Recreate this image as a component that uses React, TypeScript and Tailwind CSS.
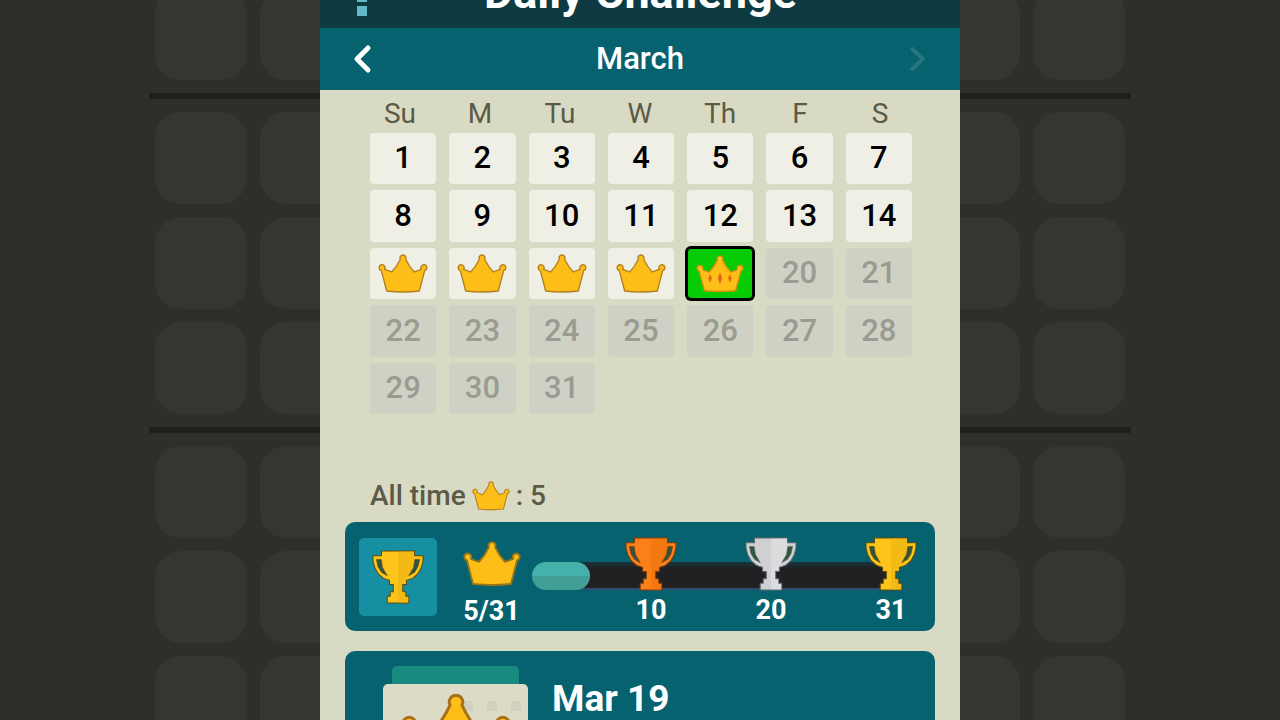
// Daily Challenge Page

import React, { useState } from 'react';
import clsx from 'clsx';

const weekdays = ['Su', 'M', 'Tu', 'W', 'Th', 'F', 'S'];
const days = Array.from({ length: 31 }, (_, i) => i + 1);
const solved = [15, 16, 17, 18];
const today = 19;

const milestones = [
  { goal: 10, color: '#fb8019', shade: '#f47710', stroke: '#7a3a08' },
  { goal: 20, color: '#d0d0d3', shade: '#dcdcdf', stroke: '#5d6a6c' },
  { goal: 31, color: '#fdc51b', shade: '#f3b914', stroke: '#5c4a0c' },
];

type CrownProps = {
  className?: string;
  stroke?: string;
  strokeWidth?: number;
  gems?: boolean;
};

const Crown: React.FC<CrownProps> = ({ className, stroke = '#b07f22', strokeWidth = 4, gems }) => (
  <svg viewBox="0 0 150 116" className={className} aria-hidden="true">
    <path
      d="M20 46 L41 54 Q57 38 67 16 A9 9 0 1 1 83 16 Q93 38 109 54 L130 46 A9 9 0 1 1 140 50 L124 111 Q75 117 26 111 L10 50 A9 9 0 1 1 20 46 Z"
      fill="#fdbf17"
      stroke={stroke}
      strokeWidth={strokeWidth}
      strokeLinejoin="round"
    />
    {gems && (
      <path
        d="M75 54 L82 73 L75 92 L68 73 Z M44 60 L50 73 L44 87 L38 73 Z M106 60 L112 73 L106 87 L100 73 Z"
        fill="#e8641b"
      />
    )}
  </svg>
);

type TrophyProps = {
  className?: string;
  color: string;
  shade: string;
  stroke: string;
};

const Trophy: React.FC<TrophyProps> = ({ className, color, shade, stroke }) => (
  <svg viewBox="0 0 154 160" className={className} aria-hidden="true">
    <path
      d="M3 17 H28 V3 H126 V17 H151 V32 L146 52 L136 70 L120 84 L102 90 V102 H91 V124 H100 V137 H109 V157 H45 V137 H54 V124 H63 V102 H52 V90 L34 84 L18 70 L8 52 L3 32 Z"
      fill={color}
      stroke={stroke}
      strokeWidth="3"
    />
    <path d="M77 5 H124 V34 L118 60 L100 88 V100 H89 V126 H98 V139 H107 V155 H77 Z" fill={shade} />
    <path
      d="M13 28 H27 L31 52 L45 76 L28 66 L18 50 Z M141 28 H127 L123 52 L109 76 L126 66 L136 50 Z"
      fill="#31543f"
      stroke={stroke}
      strokeWidth="2"
    />
  </svg>
);

const Tile: React.FC = () => <div className="size-[92px] shrink-0 rounded-[26px] bg-[#363630]" />;

const TileRow: React.FC = () => (
  <div className="flex gap-[13px] px-[6px]">
    <Tile />
    <Tile />
  </div>
);

// Dimmed game board that shows on both sides of the panel
const Board: React.FC = () => (
  <div className="flex w-[171px] flex-col overflow-hidden">
    <div className="flex h-20 shrink-0 flex-col justify-end">
      <TileRow />
    </div>
    {[0, 1].map((group) => (
      <div key={group} className="shrink-0 pt-[13px]">
        <div className="h-[6px] bg-[#201f1d]" />
        <div className="flex flex-col gap-[13px] pt-[13px]">
          <TileRow />
          <TileRow />
          <TileRow />
        </div>
      </div>
    ))}
  </div>
);

const App: React.FC = () => {
  const [selected, setSelected] = useState(today);

  return (
    <div className="grid h-screen grid-cols-[1fr_2fr_1fr] overflow-hidden bg-[#2f2f2a] font-[Roboto,sans-serif]">
      <div className="flex min-h-0 justify-end overflow-hidden">
        <Board />
      </div>

      <main className="min-h-0 min-w-0 overflow-hidden bg-[#d9dac4]">
        <header className="grid h-7 grid-cols-[1fr_auto_1fr] grid-rows-[28px] items-end overflow-hidden bg-[#0d3b41] px-9 pl-[37px] text-white">
          <button aria-label="Menu" className="flex w-3 flex-col gap-1 pb-3">
            <span className="size-[10px] bg-[#63b7c6]" />
            <span className="size-[10px] bg-[#63b7c6]" />
            <span className="size-[10px] bg-[#63b7c6]" />
          </button>
          <h1 className="pb-3 text-[45px] leading-[46px] font-bold">Daily Challenge</h1>
        </header>

        <div className="flex h-[62px] items-center justify-between bg-[#06626f] px-8 text-white">
          <button aria-label="Previous month">
            <svg viewBox="0 0 24 32" className="h-8 w-6">
              <path d="M16 5 L5 16 L16 27" fill="none" stroke="#fff" strokeWidth="5" strokeLinecap="round" strokeLinejoin="round" />
            </svg>
          </button>
          <h2 className="text-[31px] font-medium">March</h2>
          <button aria-label="Next month" disabled>
            <svg viewBox="0 0 24 32" className="h-8 w-6">
              <path d="M7 5 L19 16 L7 27" fill="none" stroke="#24767f" strokeWidth="4" strokeLinejoin="round" />
            </svg>
          </button>
        </div>

        <div className="grid grid-cols-7 px-10 pt-[5px] text-center text-[28px] leading-[38px] text-[#5b5a47]">
          {weekdays.map((day) => (
            <span key={day}>{day}</span>
          ))}
        </div>
        <div className="mr-12 ml-[50px] grid h-[281px] grid-cols-7 grid-rows-5 gap-x-[13px] gap-y-[6px]">
          {days.map((day) => (
            <button
              key={day}
              disabled={day > today}
              aria-label={`March ${day}`}
              onClick={() => setSelected(day)}
              className={clsx(
                'flex items-center justify-center rounded-[4px] text-[31px] font-medium',
                day > today ? 'bg-[#d0d1c5] text-[#9a9b91]' : 'text-black',
                day <= today && (day === selected ? 'border border-black bg-[#05cc05] ring-2 ring-black' : 'bg-[#f0efe6]')
              )}
            >
              {solved.includes(day) && <Crown className="w-[50px]" />}
              {day === today && <Crown className="w-12" stroke="#e08a10" gems />}
              {!solved.includes(day) && day !== today && day}
            </button>
          ))}
        </div>

        <p className="mt-[62px] flex h-10 items-center gap-[6px] px-[50px] text-[28px] font-medium text-[#5b5a47]">
          All time <Crown className="w-[38px]" /> : 5
        </p>

        <section className="mx-[25px] mt-[6px] flex h-[109px] rounded-[10px] bg-[#06626f] text-[27px] leading-7 font-bold text-white">
          <div className="my-4 ml-[14px] flex size-[78px] items-center justify-center rounded-[5px] bg-[#178fa3]">
            <Trophy className="w-[52px]" color="#fdc51b" shade="#f3b914" stroke="#5c4a0c" />
          </div>
          <div className="flex w-[95px] flex-col items-center pt-[19px] pl-[14px]">
            <Crown className="w-[58px]" stroke="#96741a" strokeWidth={5} />
            <span className="mt-[11px]">5/31</span>
          </div>
          <div className="relative flex-1">
            <div className="absolute top-10 right-[45px] left-0 flex h-7 items-center">
              <div className="z-10 h-7 w-[58px] rounded-full bg-linear-to-b from-[#46b1aa] from-50% to-[#419f98] to-50%" />
              <div className="-ml-5 h-7 flex-1 border-b-2 border-[#2d4f73] bg-linear-to-b from-[#17353b] via-[#212022] via-25% to-[#212022]" />
            </div>
            <div className="relative flex justify-between pt-[15px] pr-[18px] pl-[93px]">
              {milestones.map(({ goal, ...colors }) => (
                <div key={goal} className="flex w-[52px] flex-col items-center">
                  <Trophy className="w-[52px]" {...colors} />
                  <span className="mt-[5px]">{goal}</span>
                </div>
              ))}
            </div>
          </div>
        </section>

        <section className="mx-[25px] mt-5 flex h-[180px] gap-6 rounded-[10px] bg-[#06626f] pt-[15px] pl-[38px] text-white">
          <div className="w-[145px]">
            <div className="mx-[9px] h-[18px] rounded-t-[5px] bg-[#188a7f]" />
            <div className="relative flex h-[130px] justify-center rounded-[5px] bg-[#dcdbc5] pt-[9px]">
              <div className="absolute top-[17px] right-[7px] flex gap-[14px]">
                <span className="size-[10px] bg-[#d2d1bf]" />
                <span className="size-[10px] bg-[#d2d1bf]" />
                <span className="size-[10px] bg-[#d2d1bf]" />
              </div>
              <Crown className="relative h-[87px] w-[112px]" stroke="#a8701a" />
            </div>
          </div>
          <h3 className="pt-[13px] text-[37px] leading-[40px] font-bold">Mar 19</h3>
        </section>
      </main>

      <div className="flex min-h-0 overflow-hidden">
        <div className="-scale-x-100">
          <Board />
        </div>
      </div>
    </div>
  );
};

export default App;
